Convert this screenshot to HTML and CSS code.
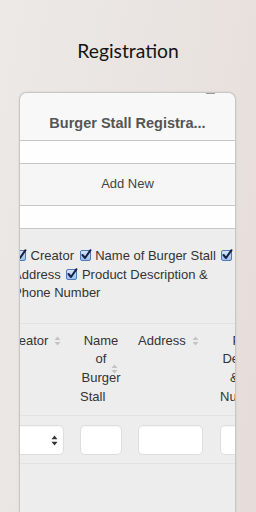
FILE: index.html
```html
<!DOCTYPE html>
<html lang="en">
<head>
    <meta charset="UTF-8">
    <meta name="viewport" content="width=device-width, initial-scale=1.0">
    <title>Registration</title>
    <link rel="stylesheet" href="styles.css">
</head>
<body>
    <h1 class="page-title">Registration</h1>

    <div class="card">
        <span class="notch"></span>
        <div class="card-header">Burger Stall Registra...</div>
        <div class="stripe"></div>
        <div class="add-new">Add New</div>
        <div class="stripe"></div>

        <div class="content">
            <div class="scroller">
                <!-- column toggles -->
                <div class="toggles">
                    <span class="check"><svg viewBox="0 0 12 12"><path d="M2.5 6 L5 9 L10.5 1.2" /></svg></span> Creator
                    <span class="check"><svg viewBox="0 0 12 12"><path d="M2.5 6 L5 9 L10.5 1.2" /></svg></span> Name of Burger Stall
                    <span class="check"><svg viewBox="0 0 12 12"><path d="M2.5 6 L5 9 L10.5 1.2" /></svg></span> Address
                    <span class="check"><svg viewBox="0 0 12 12"><path d="M2.5 6 L5 9 L10.5 1.2" /></svg></span> Product Description &amp; Phone Number
                </div>

                <!-- table -->
                <div class="row head">
                    <div class="col col-creator">Creator<span class="sort"><svg viewBox="0 0 7 10"><path d="M3.5 0.5 L6.5 4 L0.5 4 Z M3.5 9.5 L6.5 6 L0.5 6 Z" /></svg></span></div>
                    <div class="col col-name centered">Name of Burger Stall<span class="sort floating"><svg viewBox="0 0 7 10"><path d="M3.5 0.5 L6.5 4 L0.5 4 Z M3.5 9.5 L6.5 6 L0.5 6 Z" /></svg></span></div>
                    <div class="col col-address">Address<span class="sort"><svg viewBox="0 0 7 10"><path d="M3.5 0.5 L6.5 4 L0.5 4 Z M3.5 9.5 L6.5 6 L0.5 6 Z" /></svg></span></div>
                    <div class="col col-product centered">Product Description &amp; Phone Number</div>
                </div>
                <div class="row filters">
                    <div class="col col-creator">
                        <div class="field select"><svg viewBox="0 0 7 11"><path d="M3.5 0.5 L6.5 4.2 L0.5 4.2 Z M3.5 10.5 L6.5 6.8 L0.5 6.8 Z" /></svg></div>
                    </div>
                    <div class="col col-name"><div class="field"></div></div>
                    <div class="col col-address"><div class="field"></div></div>
                    <div class="col col-product"><div class="field"></div></div>
                </div>
            </div>
        </div>
    </div>
</body>
</html>
```

FILE: styles.css
```css
body {
    margin: 0;
    height: 512px;
    overflow: hidden;
    background: linear-gradient(100deg, #ece9e6 0%, #e9e3e0 60%, #e6dcd9 100%);
    font-family: "Liberation Sans", Arial, sans-serif;
    color: #333;
}

.page-title {
    margin: 0;
    padding-top: 39px;
    font-family: Lato, "Open Sans", sans-serif;
    font-weight: 400;
    font-size: 19.3px;
    line-height: 24px;
    text-align: center;
    color: #141414;
}

.card {
    position: relative;
    margin: 29px 0 0 19px;
    width: 215px;
    height: 420px;
    overflow: hidden;
    border: 1px solid #c9c7c6;
    border-bottom: none;
    border-radius: 8px 8px 0 0;
    background-color: #ededed;
    box-shadow: 0 0 2px rgba(0, 0, 0, 0.12);
}

.notch {
    position: absolute;
    top: 0;
    right: 20px;
    width: 9px;
    height: 1px;
    background-color: #9a9a9a;
}

.card-header {
    height: 27px;
    padding-top: 20px;
    font-size: 14.5px;
    font-weight: bold;
    line-height: 20px;
    text-align: center;
    color: #555;
    background-color: #f8f8f8;
    border-bottom: 1px solid #c6c6c6;
}

.stripe {
    height: 22px;
    background-color: #fefefe;
    border-bottom: 1px solid #c6c6c6;
}

.add-new {
    height: 41px;
    font-size: 13px;
    line-height: 40px;
    text-align: center;
    color: #444;
    background-color: #f6f6f6;
    border-bottom: 1px solid #c6c6c6;
}

.content {
    overflow: hidden;
}

.scroller {
    margin-left: -15px;
    width: 320px;
}

.toggles {
    width: 223px;
    padding: 18px 0 20px 8px;
    font-size: 13px;
    line-height: 18.6px;
    color: #333;
    border-bottom: 1px solid #e2e2e2;
}

.check {
    display: inline-block;
    position: relative;
    width: 11px;
    height: 11px;
    margin: 0 1px 0 2px;
    vertical-align: -1px;
    box-sizing: border-box;
    border: 1px solid #4f78b8;
    border-radius: 2px;
    background: linear-gradient(#d6e5f8, #9dbfea);
}

.check svg {
    position: absolute;
    left: -1px;
    top: -2px;
    width: 12px;
    height: 12px;
    overflow: visible;
    fill: none;
    stroke: #142247;
    stroke-width: 2;
    stroke-linecap: round;
    stroke-linejoin: round;
}

.row {
    display: flex;
    border-bottom: 1px solid #e2e2e2;
}

.row.head {
    padding: 8px 0 9px;
    font-size: 13px;
    line-height: 18.6px;
    color: #333;
}

.row.filters {
    padding: 9px 0 8px;
}

.col {
    position: relative;
    flex: none;
    margin-right: 16px;
}

.col-creator {
    width: 59px;
}

.col-name {
    width: 42px;
}

.col-address {
    width: 65px;
    margin-right: 17px;
}

.col-product {
    width: 70px;
}

.centered {
    text-align: center;
    text-align-last: left;
}

.sort {
    display: inline-block;
    margin-left: 6px;
    vertical-align: -1px;
}

.sort svg {
    display: block;
    width: 7px;
    height: 10px;
    fill: #c3c3c3;
}

.sort.floating {
    position: absolute;
    right: 4px;
    top: 50%;
    margin: -5px 0 0;
}

.field {
    position: relative;
    height: 30px;
    box-sizing: border-box;
    background-color: #fff;
    border: 1px solid #dedede;
    border-radius: 5px;
    box-shadow: inset 0 1px 1px rgba(0, 0, 0, 0.04);
}

.select svg {
    position: absolute;
    right: 5px;
    top: 9px;
    width: 7px;
    height: 11px;
    fill: #333;
}
```
